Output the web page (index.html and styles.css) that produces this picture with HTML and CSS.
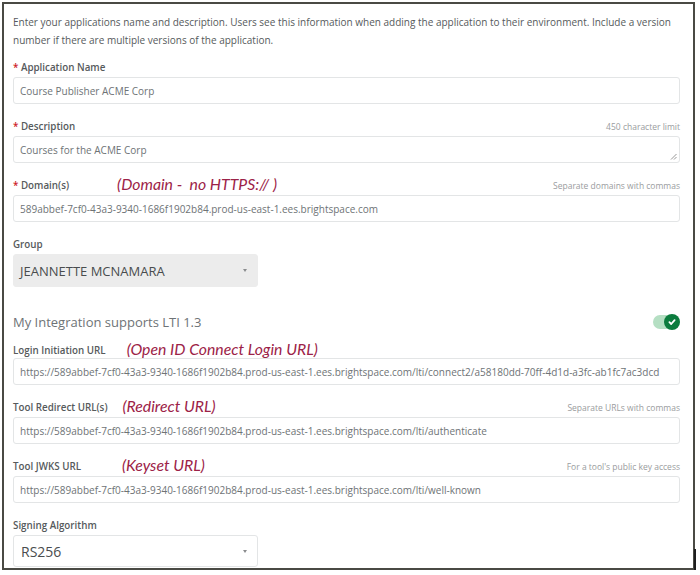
FILE: index.html
```html
<!DOCTYPE html>
<html>
<head>
<meta charset="utf-8">
<link rel="stylesheet" href="styles.css">
</head>
<body>
<div class="frame">
  <p class="intro">Enter your applications name and description. Users see this information when adding the application to their environment. Include a version number if there are multiple versions of the application.</p>

  <div class="field">
    <div class="label-row"><span class="label"><span class="req">*</span> Application Name</span></div>
    <div class="input">Course Publisher ACME Corp</div>
  </div>

  <div class="field">
    <div class="label-row"><span class="label"><span class="req">*</span> Description</span><span class="hint">450 character limit</span></div>
    <div class="input textarea">Courses for the ACME Corp
      <svg class="grip" width="7" height="7" viewBox="0 0 7 7"><path d="M6.5 1 L1 6.5 M6.5 4 L4 6.5" stroke="#8a8a8a" stroke-width="0.9" fill="none"/></svg>
    </div>
  </div>

  <div class="field">
    <div class="label-row"><span class="label"><span class="req">*</span> Domain(s)</span><span class="note note-domain">(Domain -&nbsp; no HTTPS:// )</span><span class="hint">Separate domains with commas</span></div>
    <div class="input">589abbef-7cf0-43a3-9340-1686f1902b84.prod-us-east-1.ees.brightspace.com</div>
  </div>

  <div class="field">
    <div class="label-row"><span class="label">Group</span></div>
    <div class="select grey"><span>JEANNETTE MCNAMARA</span><span class="caret"></span></div>
  </div>

  <div class="lti-row">
    <span class="lti-title">My Integration supports LTI 1.3</span>
    <span class="toggle"><span class="knob"><svg width="10" height="10" viewBox="0 0 10 10"><path d="M2.4 5.2 L4.2 7 L7.6 3.2" stroke="#fff" stroke-width="1.8" fill="none" stroke-linecap="round" stroke-linejoin="round"/></svg></span></span>
  </div>

  <div class="field tight">
    <div class="label-row"><span class="label">Login Initiation URL</span><span class="note note-login">(Open ID Connect Login URL)</span></div>
    <div class="input">https://589abbef-7cf0-43a3-9340-1686f1902b84.prod-us-east-1.ees.brightspace.com/lti/connect2/a58180dd-70ff-4d1d-a3fc-ab1fc7ac3dcd</div>
  </div>

  <div class="field">
    <div class="label-row"><span class="label">Tool Redirect URL(s)</span><span class="note note-redirect">(Redirect URL)</span><span class="hint">Separate URLs with commas</span></div>
    <div class="input">https://589abbef-7cf0-43a3-9340-1686f1902b84.prod-us-east-1.ees.brightspace.com/lti/authenticate</div>
  </div>

  <div class="field">
    <div class="label-row"><span class="label">Tool JWKS URL</span><span class="note note-jwks">(Keyset URL)</span><span class="hint">For a tool's public key access</span></div>
    <div class="input">https://589abbef-7cf0-43a3-9340-1686f1902b84.prod-us-east-1.ees.brightspace.com/lti/well-known</div>
  </div>

  <div class="field last">
    <div class="label-row"><span class="label">Signing Algorithm</span></div>
    <div class="select white"><span>RS256</span><span class="caret"></span></div>
  </div>
</div>
<div class="shadow-edge"></div>
</body>
</html>
```

FILE: styles.css
```css
html, body {
  margin: 0;
  padding: 0;
  background: #ffffff;
}
body {
  position: relative;
  font-family: "Open Sans", "Liberation Sans", sans-serif;
  color: #565a5c;
}
.frame {
  position: relative;
  margin: 2px 0 0 2px;
  width: 693px;
  height: 568px;
  border: 2px solid #4a4a44;
  padding: 0 13px 0 9px;
  box-sizing: border-box;
  overflow: hidden;
}
.shadow-edge {
  position: absolute;
  left: 694px;
  top: 549px;
  width: 2px;
  height: 23px;
  background: #1e1e1e;
}
.intro {
  margin: 9px 0 11px 0;
  font-size: 10px;
  line-height: 18px;
  color: #565a5c;
}
.field {
  margin-bottom: 15px;
}
.field.last {
  margin-bottom: 0;
}
.label-row {
  display: flex;
  align-items: center;
  height: 14px;
  margin-bottom: 3px;
}
.field.tight .label-row {
  margin-bottom: 1px;
}
.label {
  font-size: 9.8px;
  font-weight: 600;
  color: #565a5c;
  white-space: nowrap;
}
.req {
  color: #cd2026;
}
.hint {
  margin-left: auto;
  font-size: 8.5px;
  color: #9a9c9e;
}
.note {
  font-family: "Lato", "Liberation Sans", sans-serif;
  font-style: italic;
  font-size: 15.8px;
  color: #9c2247;
  line-height: 14px;
  white-space: nowrap;
  position: relative;
  top: -1px;
}
.note-domain { margin-left: 48px; }
.note-login { margin-left: 21px; }
.note-redirect { margin-left: 15px; }
.note-jwks { margin-left: 41px; }
.input {
  position: relative;
  height: 27px;
  box-sizing: border-box;
  border: 1px solid #e3e5e6;
  border-radius: 3px;
  padding: 0 6px;
  display: flex;
  align-items: center;
  font-size: 10px;
  color: #6e7376;
  white-space: nowrap;
  overflow: hidden;
}
.textarea .grip {
  position: absolute;
  right: 2px;
  bottom: 2px;
}
.select {
  position: relative;
  width: 245px;
  height: 33px;
  box-sizing: border-box;
  border-radius: 3px;
  display: flex;
  align-items: center;
  padding: 0 7px 0 6px;
  font-size: 13px;
  color: #494c4e;
}
.select.grey {
  background: #ececec;
  border: 1px solid #ececec;
}
.select.white {
  background: #fff;
  border: 1px solid #e3e5e6;
  font-size: 14px;
  padding-left: 7px;
  height: 32px;
}
.caret {
  margin-left: auto;
  margin-right: 3px;
  width: 0;
  height: 0;
  border-left: 2.5px solid transparent;
  border-right: 2.5px solid transparent;
  border-top: 3px solid #8a8c8e;
}
.lti-row {
  display: flex;
  align-items: center;
  justify-content: space-between;
  margin-top: 26px;
  height: 18px;
  margin-bottom: 12px;
}
.lti-title {
  font-size: 13px;
  color: #6e7376;
}
.toggle {
  position: relative;
  width: 26px;
  height: 14px;
  border-radius: 7px;
  background: #b5dfc3;
  margin-right: 1px;
}
.knob {
  position: absolute;
  right: -1px;
  top: -1px;
  width: 16px;
  height: 16px;
  border-radius: 50%;
  background: #0c7c3e;
  display: flex;
  align-items: center;
  justify-content: center;
}
.knob svg {
  display: block;
}
```
